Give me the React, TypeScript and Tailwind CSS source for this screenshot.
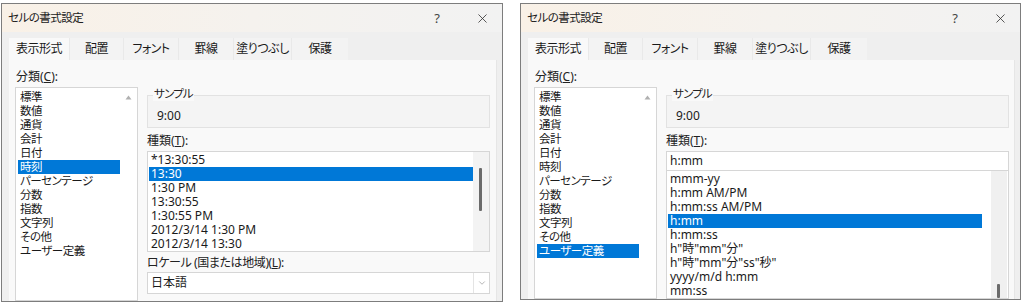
import React from 'react';
import { X, ChevronDown } from 'lucide-react';

const FONT = "font-['Noto_Sans','Noto_Sans_CJK_JP',sans-serif] [font-feature-settings:'palt']";

const cats = ['標準', '数値', '通貨', '会計', '日付', '時刻', 'パーセンテージ', '分数', '指数', '文字列', 'その他', 'ユーザー定義'];
const tabs: [string, string][] = [
  ['表示形式', 'w-[60px]'],
  ['配置', 'w-[54px]'],
  ['フォント', 'w-[55px]'],
  ['罫線', 'w-[55px]'],
  ['塗りつぶし', 'w-[58px]'],
  ['保護', 'w-[57px]'],
];
const timeTypes = ['*13:30:55', '13:30', '1:30 PM', '13:30:55', '1:30:55 PM', '2012/3/14 1:30 PM', '2012/3/14 13:30'];
const customTypes = ['mmm-yy', 'h:mm AM/PM', 'h:mm:ss AM/PM', 'h:mm', 'h:mm:ss', 'h"時"mm"分"', 'h"時"mm"分"ss"秒"', 'yyyy/m/d h:mm', 'mm:ss'];

function Row({ text, selected, cjk }: { text: string; selected: boolean; cjk?: boolean }) {
  const base = cjk
    ? 'h-[14px] leading-[14px] pl-[2px] text-[11.5px] whitespace-nowrap tracking-[-0.5px]'
    : 'h-[14px] leading-[14px] pl-[2px] text-[12px] whitespace-nowrap';
  return (
    <div className={selected ? `${base} bg-[#0078d7] text-white` : `${base} text-[#1a1a1a]`}>{text}</div>
  );
}

function Dialog({ custom }: { custom: boolean }) {
  return (
    <div
      className={
        custom
          ? 'w-[501px] h-[297px] mt-[3px] ml-[17px] border border-[#7d7d7d] bg-[#efefef] flex flex-col overflow-hidden shrink-0'
          : 'w-[502px] h-[299px] mt-[3px] ml-[1px] border border-[#7d7d7d] bg-[#efefef] flex flex-col overflow-hidden shrink-0'
      }
    >
      {/* title bar */}
      <div className="h-[28px] shrink-0 flex items-center bg-gradient-to-r from-[#f9f1e7] via-[#f5f2ee] to-[#f2f2f2]">
        <span className="ml-[6px] text-[11.5px] tracking-[-0.5px] text-[#202020]">セルの書式設定</span>
        <span className="ml-auto text-[13px] text-[#444] leading-none">?</span>
        <X className="ml-[35px] mr-[12px] text-[#333]" size={15} strokeWidth={1.3} />
      </div>
      {/* tabs */}
      <div className="mt-[6px] h-[22px] shrink-0 flex pl-[7px]">
        {tabs.map(([t, w], i) => (
          <div
            key={t}
            className={
              i === 0
                ? `${w} h-full flex items-center justify-center text-[12px] tracking-[-0.5px] text-[#1a1a1a] bg-[#f9f9f9]`
                : `${w} h-full flex items-center justify-center text-[12px] tracking-[-0.5px] text-[#1a1a1a] bg-[#f3f3f3] border-l border-[#e9e9e9]`
            }
          >
            {t}
          </div>
        ))}
      </div>
      {/* panel */}
      <div className="flex-1 ml-[7px] mr-[5px] bg-[#f9f9f9] border-r border-[#e6e6e6] flex min-h-0">
        {/* left column */}
        <div className="ml-[6px] w-[123px] flex flex-col">
          <div className="mt-[10px] h-[14px] leading-[14px] pl-[1px] text-[12px] text-[#222]">
            分類(<u>C</u>):
          </div>
          <div className="mt-[3px] flex-1 bg-white border border-[#d6d6d6] flex min-h-0">
            <div className="w-[104px] pl-[2px] pt-[2px] flex flex-col">
              {cats.map((c, i) => (
                <Row key={c} text={c} cjk selected={custom ? i === 11 : i === 5} />
              ))}
            </div>
            <div className="w-[17px] flex justify-center pt-[7px]">
              <svg width="7" height="5" viewBox="0 0 7 5">
                <path d="M3.5 0.5 L6.5 4.5 L0.5 4.5 Z" fill="#b0b0b0" />
              </svg>
            </div>
          </div>
        </div>
        {/* right column */}
        <div className="ml-[9px] w-[343px] flex flex-col">
          <div className="relative mt-[35px] h-[33px] bg-[#f4f4f4] border border-[#e2e2e2]">
            <span className="absolute -top-[9px] left-[5px] px-[1px] bg-[#f9f9f9] text-[11.5px] tracking-[-0.8px] leading-[14px] text-[#222]">
              サンプル
            </span>
            <div className="mt-[13px] ml-[9px] text-[12px] leading-[14px] text-[#1a1a1a]">9:00</div>
          </div>
          <div className="mt-[6px] h-[14px] leading-[14px] text-[12px] text-[#222]">
            種類(<u>T</u>):
          </div>
          {custom ? (
            <>
              <div className="mt-[3px] h-[20px] bg-white border border-[#d6d6d6] flex items-center pl-[3px] text-[12px] text-[#1a1a1a]">
                h:mm
              </div>
              <div className="flex-1 bg-white border border-t-0 border-[#d6d6d6] flex min-h-0">
                <div className="w-[315px] pl-[1px] pt-[1px] flex flex-col">
                  {customTypes.map((c, i) => (
                    <Row key={c} text={c} selected={i === 3} />
                  ))}
                </div>
                <div className="ml-[9px] w-[16px] bg-[#f0f0f0] flex flex-col">
                  <div className="mt-[113px] ml-[6px] w-[3px] flex-1 bg-[#6b6b6b] rounded-[1px]" />
                </div>
              </div>
            </>
          ) : (
            <>
              <div className="mt-[3px] h-[101px] bg-white border border-[#d6d6d6] flex">
                <div className="w-[325px] pl-[1px] pt-[1px] flex flex-col">
                  {timeTypes.map((c, i) => (
                    <Row key={c} text={c} selected={i === 1} />
                  ))}
                </div>
                <div className="w-[16px] bg-[#f3f3f3] flex flex-col">
                  <div className="mt-[16px] ml-[6px] w-[3px] h-[43px] bg-[#6b6b6b] rounded-[1px]" />
                </div>
              </div>
              <div className="mt-[4px] h-[14px] leading-[14px] text-[12px] tracking-[-0.4px] text-[#222]">
                ロケール (国または地域)(<u>L</u>):
              </div>
              <div className="mt-[2px] h-[22px] bg-white border border-[#d6d6d6] flex items-center">
                <span className="ml-[3px] text-[12px] text-[#1a1a1a]">日本語</span>
                <div className="ml-auto w-[16px] h-full border-l border-[#e4e4e4] flex items-center justify-center">
                  <ChevronDown size={10} strokeWidth={1.5} className="text-[#8a8a8a]" />
                </div>
              </div>
            </>
          )}
        </div>
      </div>
    </div>
  );
}

export default function App() {
  return (
    <div className={`w-[1024px] h-[304px] bg-white flex items-start overflow-hidden ${FONT}`}>
      <Dialog custom={false} />
      <Dialog custom={true} />
    </div>
  );
}
